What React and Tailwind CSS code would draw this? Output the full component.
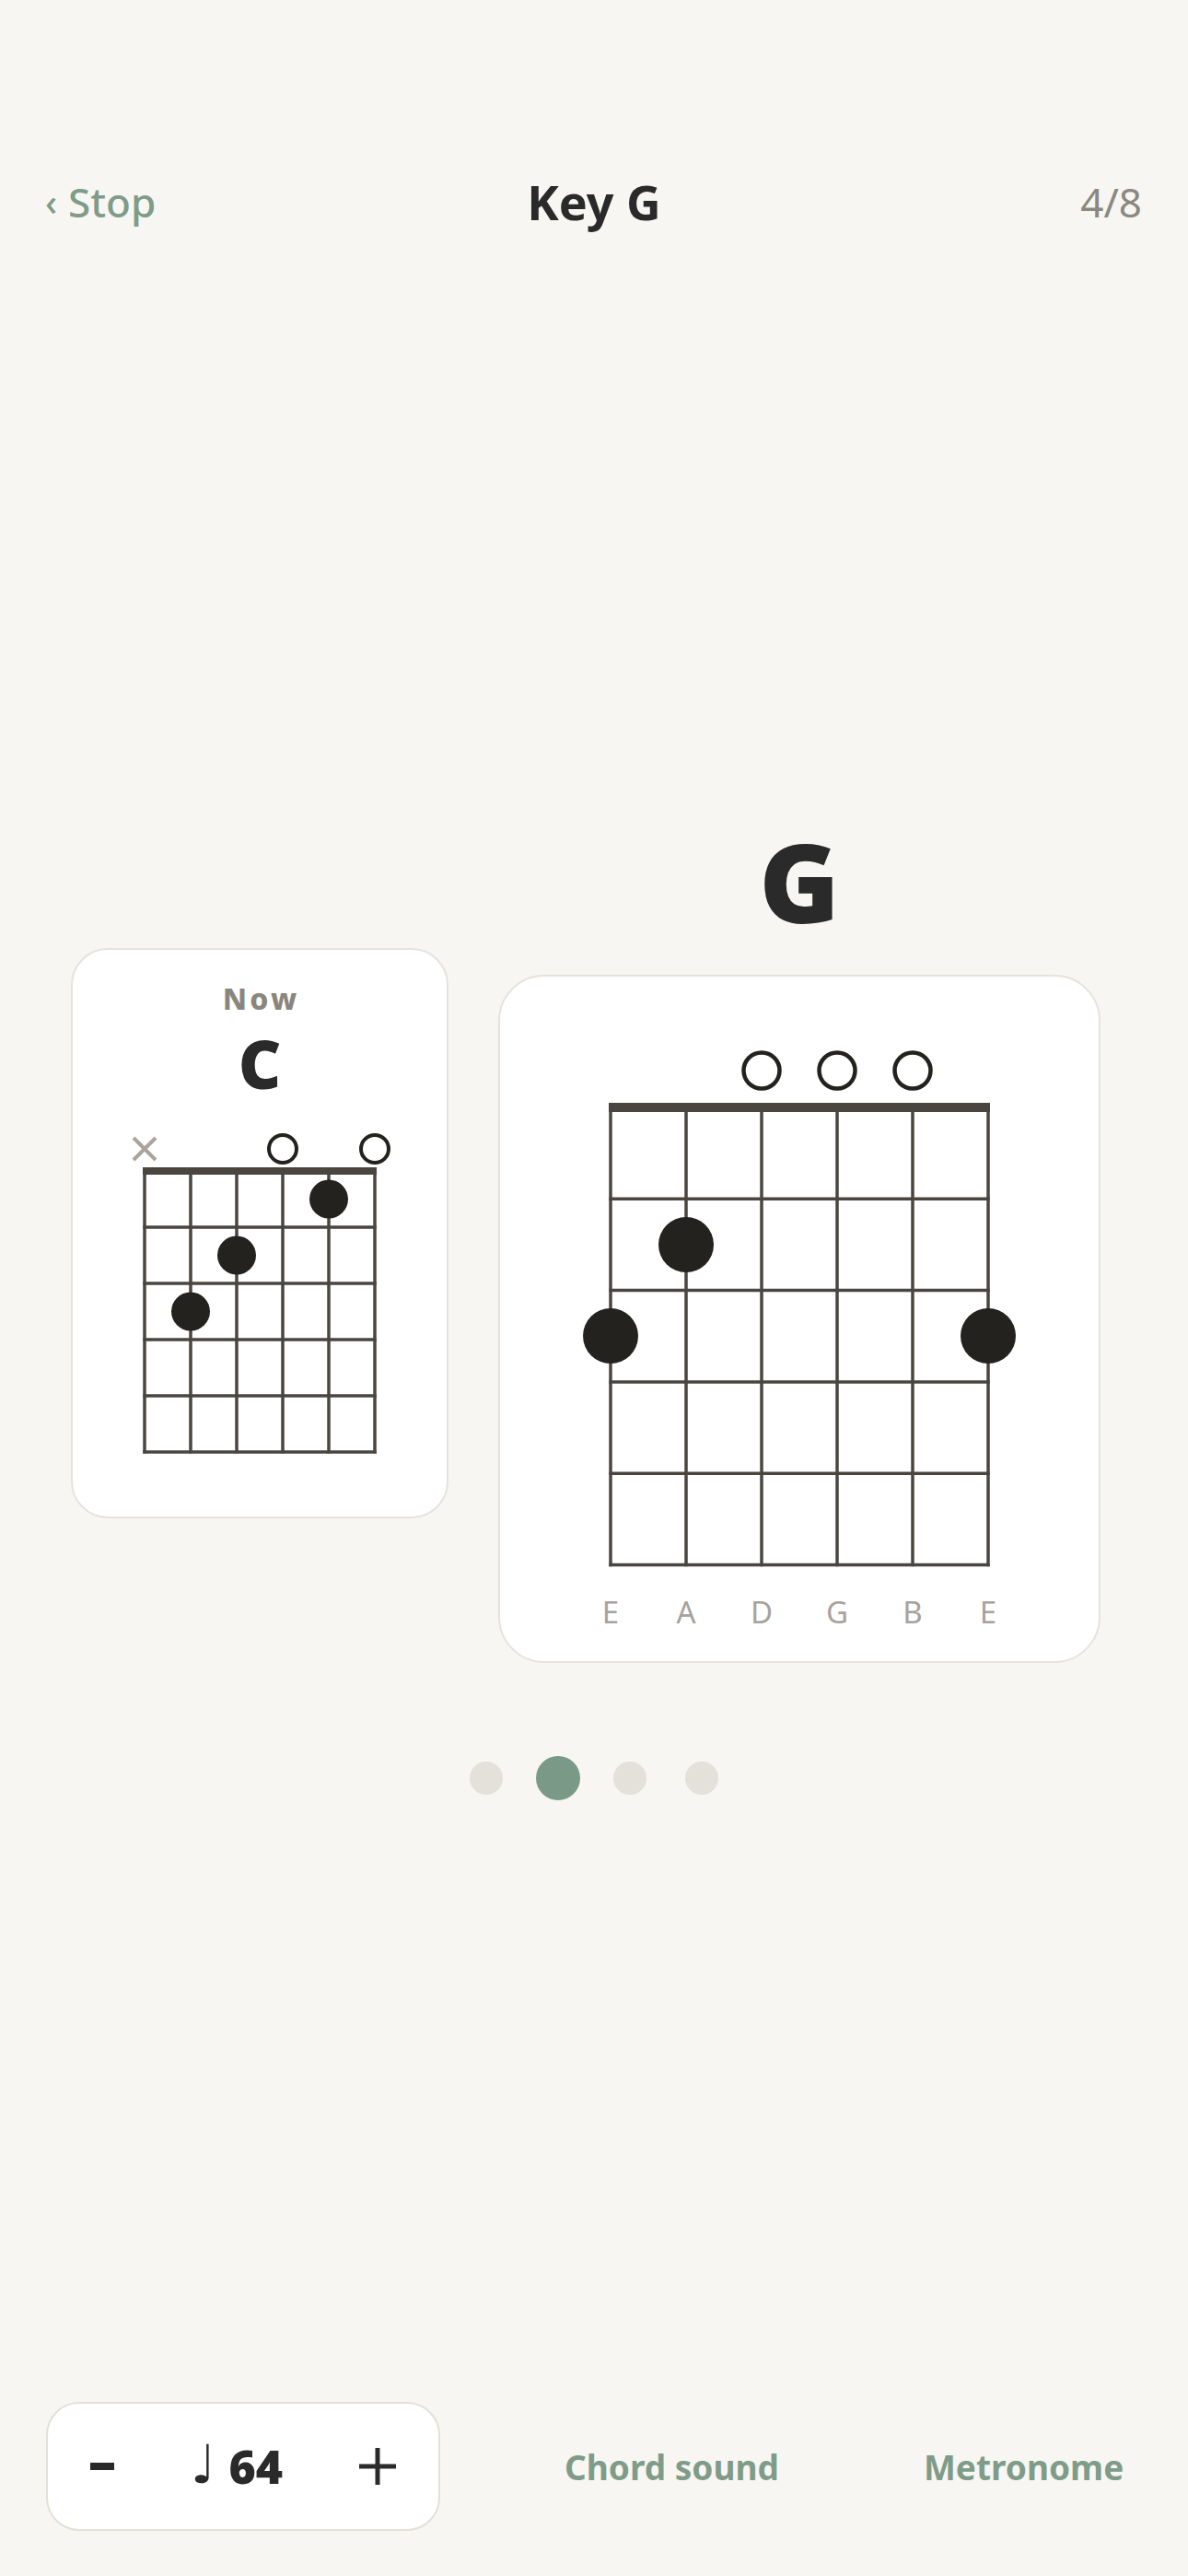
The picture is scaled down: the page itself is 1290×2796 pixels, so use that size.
import React from 'react';

const FONT = { fontFamily: '"Noto Sans", "Open Sans", Arial, sans-serif' };

const LINE = '#4a463f';
const INK = '#23221e';

function SmallChord() {
    const strings = [30, 80, 130, 180, 230, 280];
    const frets = [107, 168, 229, 290, 351];
    return (
        <svg width="310" height="355" viewBox="0 0 310 355">
            {/* muted low E */}
            <path d="M18 10 L42 34 M42 10 L18 34" stroke="#aaa49c" strokeWidth="4" />
            <circle cx="180" cy="22" r="15" fill="none" stroke={INK} strokeWidth="4" />
            <circle cx="280" cy="22" r="15" fill="none" stroke={INK} strokeWidth="4" />
            <rect x="28" y="42" width="254" height="8" fill={LINE} />
            {strings.map((x) => (
                <line key={x} x1={x} y1="46" x2={x} y2="352.5" stroke={LINE} strokeWidth="3.5" />
            ))}
            {frets.map((y) => (
                <line key={y} x1="28.25" y1={y} x2="281.75" y2={y} stroke={LINE} strokeWidth="3.5" />
            ))}
            <circle cx="230" cy="76.5" r="21" fill={INK} />
            <circle cx="130" cy="137.5" r="21" fill={INK} />
            <circle cx="80" cy="198.5" r="21" fill={INK} />
        </svg>
    );
}

function BigChord() {
    const strings = [40, 122, 204, 286, 368, 450];
    const frets = [171.3, 270.6, 369.9, 469.2, 568.5];
    return (
        <svg width="490" height="575" viewBox="0 0 490 575">
            {[204, 286, 368].map((x) => (
                <circle key={x} cx={x} cy="32" r="19.5" fill="none" stroke={INK} strokeWidth="4.5" />
            ))}
            <rect x="38" y="67" width="414" height="10" fill={LINE} />
            {strings.map((x) => (
                <line key={x} x1={x} y1="72" x2={x} y2="570.3" stroke={LINE} strokeWidth="3.5" />
            ))}
            {frets.map((y) => (
                <line key={y} x1="38.25" y1={y} x2="451.75" y2={y} stroke={LINE} strokeWidth="3.5" />
            ))}
            <circle cx="122" cy="221" r="30" fill={INK} />
            <circle cx="40" cy="320" r="30" fill={INK} />
            <circle cx="450" cy="320" r="30" fill={INK} />
        </svg>
    );
}

export default function App() {
    const dots = [false, true, false, false];
    return (
        <div className="h-[2796px] w-[1290px] bg-[#f7f6f3] flex flex-col overflow-hidden" style={FONT}>
            {/* header */}
            <div className="mt-[189px] h-[60px] px-[49px] flex items-center justify-between relative">
                <button className="text-[44px] leading-none font-medium text-[#7f9c88] flex items-center gap-[12px]">
                    <span className="text-[40px]">‹</span>
                    <span>Stop</span>
                </button>
                <div className="absolute left-0 right-0 text-center text-[52px] leading-none font-bold text-[#2a2a2a]">
                    Key G
                </div>
                <div className="text-[44px] leading-none text-[#8c877f] pr-px">4/8</div>
            </div>

            {/* chords */}
            <div className="mt-[649px] pl-[77px] flex items-start gap-[54px]">
                <div className="mt-[131px] w-[410px] h-[619px] bg-white border-2 border-[#e6e2dc] rounded-[40px] flex flex-col items-center pt-[37px]">
                    <div className="text-[32px] leading-none font-extrabold tracking-[0.1em] text-[#8a857d] pl-[0.1em]">
                        Now
                    </div>
                    <div className="mt-[18px] text-[72px] leading-none font-black text-[#2a2a2a]">C</div>
                    <div className="mt-[35px]">
                        <SmallChord />
                    </div>
                </div>

                <div className="w-[654px] flex flex-col items-center">
                    <div className="text-[118px] leading-none font-black text-[#2a2a2a]">G</div>
                    <div className="mt-[42px] w-[654px] h-[747px] bg-white border-2 border-[#e6e2dc] rounded-[50px] flex flex-col items-center pt-[70px]">
                        <BigChord />
                        <div className="mt-[28px] grid grid-cols-6 w-[492px] text-[33px] leading-none text-[#a8a29c]">
                            {['E', 'A', 'D', 'G', 'B', 'E'].map((s, i) => (
                                <span key={i} className="text-center">{s}</span>
                            ))}
                        </div>
                    </div>
                </div>
            </div>

            {/* pager */}
            <div className="mt-[101px] h-[48px] flex justify-center items-center">
                {dots.map((active, i) => (
                    <div key={i} className="w-[78px] flex justify-center">
                        {active ? (
                            <div className="w-[48px] h-[48px] rounded-full bg-[#7a9a87]" />
                        ) : (
                            <div className="w-[36px] h-[36px] rounded-full bg-[#e4e0da]" />
                        )}
                    </div>
                ))}
            </div>

            {/* bottom bar */}
            <div className="mt-auto mb-[49px] pl-[50px] flex items-center">
                <div className="w-[428px] h-[140px] bg-white border-2 border-[#e4e0d9] rounded-[36px] flex items-center justify-between px-[46px]">
                    <button className="w-[26px] h-[40px] flex items-center">
                        <svg width="26" height="8" viewBox="0 0 26 8">
                            <rect width="26" height="8" fill="#2a2a2a" />
                        </svg>
                    </button>
                    <div className="flex items-center text-[#2a2a2a]">
                        <span className="text-[58px] leading-none mr-[14px] -mt-[4px]" style={{ fontFamily: '"DejaVu Sans", sans-serif' }}>♩</span>
                        <span className="text-[50px] leading-none font-black">64</span>
                    </div>
                    <button className="w-[40px] h-[40px]">
                        <svg width="40" height="40" viewBox="0 0 40 40">
                            <path d="M20 0 V40 M0 20 H40" stroke="#2a2a2a" strokeWidth="5" />
                        </svg>
                    </button>
                </div>
                <button className="ml-[135px] text-[37px] leading-none font-bold text-[#7f9c88]">Chord sound</button>
                <button className="ml-[157px] text-[37px] leading-none font-bold text-[#7f9c88]">Metronome</button>
            </div>
        </div>
    );
}
